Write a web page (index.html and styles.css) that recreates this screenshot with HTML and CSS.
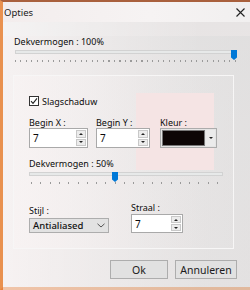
FILE: index.html
```html
<!DOCTYPE html>
<html>
<head>
<meta charset="utf-8">
<link rel="stylesheet" href="styles.css">
</head>
<body>
<div class="window">
  <div class="titlebar">
    <span class="title">Opties</span>
    <svg class="close" width="9" height="9" viewBox="0 0 9 9"><path d="M0.5 0.5L8.5 8.5M8.5 0.5L0.5 8.5" stroke="#222" stroke-width="1.1" fill="none"/></svg>
  </div>
  <div class="content">
    <div class="label top-label">Dekvermogen : 100%</div>
    <div class="slider slider-main">
      <div class="track"></div>
      <svg class="thumb" style="left:216px" width="6" height="10" viewBox="0 0 6 10"><path d="M0 0H6V7.5L3 10L0 7.5Z" fill="#0078d7"/></svg>
      <div class="ticks"></div>
    </div>
    <div class="group">
      <div class="check">
        <span class="box"><svg width="8" height="8" viewBox="0 0 8 8"><path d="M1 4.2L3 6.3L7 1.3" stroke="#222" stroke-width="1.1" fill="none"/></svg></span>
        <span>Slagschaduw</span>
      </div>
      <div class="fields">
        <div class="field fx">
          <div class="label">Begin X :</div>
          <div class="spin"><span class="val">7</span><span class="arrows"><span class="arr up"></span><span class="arr down"></span></span></div>
        </div>
        <div class="field fy">
          <div class="label">Begin Y :</div>
          <div class="spin"><span class="val">7</span><span class="arrows"><span class="arr up"></span><span class="arr down"></span></span></div>
        </div>
        <div class="field fk">
          <div class="label">Kleur :</div>
          <div class="color"><span class="swatch"></span><span class="drop"><span class="tri"></span></span></div>
        </div>
      </div>
      <div class="label sub-label">Dekvermogen : 50%</div>
      <div class="slider slider-small">
        <div class="track"></div>
        <svg class="thumb" style="left:83px" width="6" height="10" viewBox="0 0 6 10"><path d="M0 0H6V7.5L3 10L0 7.5Z" fill="#0078d7"/></svg>
        <div class="ticks"></div>
      </div>
      <div class="bottom-row">
        <div class="field fs">
          <div class="label">Stijl :</div>
          <div class="combo"><span>Antialiased</span><svg width="8" height="5" viewBox="0 0 8 5"><path d="M0.5 0.8L4 4L7.5 0.8" stroke="#555" stroke-width="1" fill="none"/></svg></div>
        </div>
        <div class="field fr">
          <div class="label">Straal :</div>
          <div class="spin"><span class="val">7</span><span class="arrows"><span class="arr up"></span><span class="arr down"></span></span></div>
        </div>
      </div>
    </div>
    <div class="buttons">
      <button class="btn ok">Ok</button>
      <button class="btn cancel">Annuleren</button>
    </div>
  </div>
</div>
</body>
</html>
```

FILE: styles.css
```css
* { box-sizing: border-box; }
html, body { margin: 0; padding: 0; }
body {
  width: 250px;
  height: 290px;
  overflow: hidden;
  font-family: "Noto Sans", "Open Sans", sans-serif;
  font-size: 9px;
  color: #0c0c0c;
  background: #e3e3e3;
}
.window {
  width: 250px;
  height: 290px;
  border-top: 2px solid #a9603d;
  border-left: 3px solid #e9914f;
  border-bottom: 3px solid #e8823d;
  background:
    linear-gradient(to right, rgba(255,255,255,0.55) 0px, rgba(255,255,255,0.25) 110px, rgba(255,255,255,0) 200px),
    linear-gradient(to bottom, #e6e3e3 0px, #ece8e8 120px, #eee9e9 290px);
}
.titlebar {
  height: 20px;
  display: flex;
  align-items: center;
  justify-content: space-between;
  padding: 0 5px 0 1px;
  background: linear-gradient(to right, #f3eded, #f6f3f3 60%, #f1efef);
}
.title { font-size: 9.5px; color: #1a1a1a; }
.close { margin-top: 1px; }
.content {
  padding-left: 10px;
  background: linear-gradient(to right, rgba(246,240,240,0.6), rgba(222,222,222,0.6) 80%, rgba(220,220,220,0.6));
  height: 265px;
}
.label { line-height: 11px; height: 11px; white-space: nowrap; }
.top-label { margin-top: 14px; padding-left: 1px; }
.slider { position: relative; height: 16px; }
.slider .track {
  margin-top: 3px;
  height: 4px;
  background: #e7e9e9;
  border: 1px solid #d2d2d2;
}
.slider .thumb { position: absolute; top: 0; }
.slider .ticks {
  margin-top: 6px;
  height: 2px;
}
.slider-main { margin-left: 2px; width: 222px; }
.slider-main .ticks {
  background: repeating-linear-gradient(to right, #9a9a9a 0 1px, transparent 1px 5.5px);
}
.slider-small { margin-left: 0; width: 194px; margin-top: 2px; }
.slider-small .ticks {
  margin-left: 2px;
  background: repeating-linear-gradient(to right, #9a9a9a 0 1px, transparent 1px 9.3px);
}
.group {
  margin-top: 9px;
  width: 221px;
  height: 174px;
  border: 1px solid #f7f6f6;
  padding: 19px 0 0 15px;
  background:
    linear-gradient(#f5e4e4, #f5e4e4) 122px 17px / 78px 77px no-repeat,
    linear-gradient(to right, rgba(248,243,243,0.7), rgba(240,236,236,0.3) 60%, rgba(230,228,228,0.2));
}
.check { display: flex; align-items: center; height: 12px; gap: 3px; }
.check .box {
  width: 10px; height: 10px;
  border: 1px solid #333;
  background: #fff;
  display: flex; align-items: center; justify-content: center;
}
.fields { display: flex; margin-top: 10px; }
.field { display: flex; flex-direction: column; }
.fx { width: 59px; margin-right: 8px; }
.fy { width: 54px; margin-right: 10px; }
.fk { width: 57px; }
.spin {
  height: 20px;
  border: 1px solid #a9a9a9;
  background: #fff;
  display: flex;
  justify-content: space-between;
  padding: 1px;
}
.spin .val { padding-left: 2px; line-height: 16px; font-size: 10px; }
.arrows { display: flex; flex-direction: column; gap: 1px; width: 10px; }
.arr {
  flex: 1;
  background: #ececec;
  border: 1px solid #c8c8c8;
  display: flex; align-items: center; justify-content: center;
}
.arr::after { content: ""; border-left: 2px solid transparent; border-right: 2px solid transparent; }
.arr.up::after { border-bottom: 2px solid #222; }
.arr.down::after { border-top: 2px solid #222; }
.color {
  height: 20px;
  border: 1px solid #acacac;
  background: #e5e5e5;
  display: flex;
  padding: 1px;
  gap: 1px;
}
.swatch { flex: 1; background: #0d0606; border: 1px solid #777; }
.drop { width: 9px; display: flex; align-items: center; justify-content: center; background: #ebebeb; }
.tri { border-left: 2px solid transparent; border-right: 2px solid transparent; border-top: 2px solid #222; }
.sub-label { margin-top: 10px; }
.bottom-row { display: flex; margin-top: 14px; }
.fs { width: 80px; margin-top: 3px; margin-right: 22px; }
.fs .label { margin-bottom: 2px; }
.combo {
  height: 15px;
  border: 1px solid #adadad;
  background: #e2e2e2;
  display: flex;
  align-items: center;
  justify-content: space-between;
  padding: 0 3px 0 3px;
  color: #111;
  font-size: 9.5px;
  font-weight: 500;
}
.fr { width: 52px; }
.fr .spin { height: 19px; margin-top: 1px; }
.buttons {
  display: flex;
  justify-content: flex-end;
  gap: 7px;
  margin-top: 11px;
  width: 224px;
}
.btn {
  font-family: inherit;
  font-size: 10.5px;
  color: #1b1b1b;
  height: 19px;
  background: #e1e1e1;
  border: 1px solid #adadad;
  padding: 0;
  margin: 0;
}
.ok { width: 58px; }
.cancel { width: 62px; }
```
